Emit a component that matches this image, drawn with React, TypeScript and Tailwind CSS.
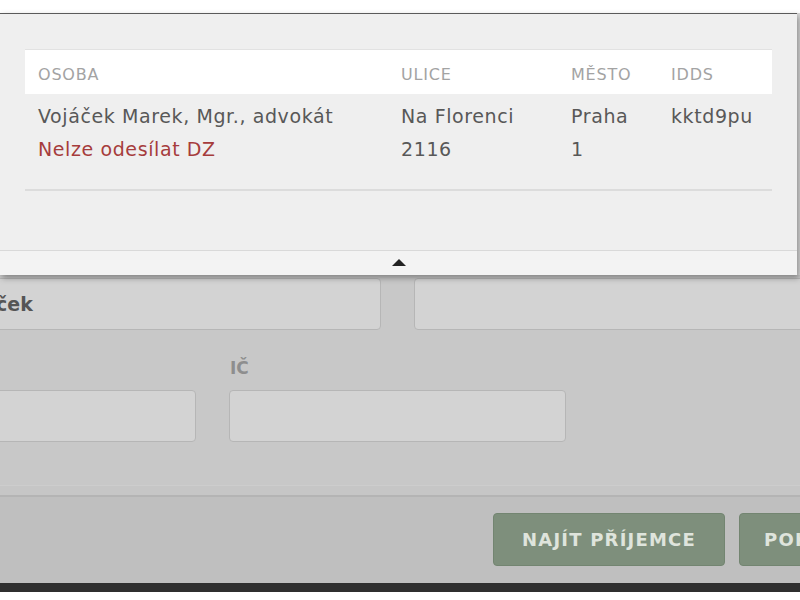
import React from "react";

// Recipient search result row
interface Recipient {
  name: string;
  note: string;
  street: string[];
  city: string[];
  idds: string;
}

const recipients: Recipient[] = [
  {
    name: "Vojáček Marek, Mgr., advokát",
    note: "Nelze odesílat DZ",
    street: ["Na Florenci", "2116"],
    city: ["Praha", "1"],
    idds: "kktd9pu",
  },
];

const font = { fontFamily: '"DejaVu Sans", "Open Sans", sans-serif' };

function ResultsPopup() {
  return (
    <div className="relative z-10 w-[797px] border-t border-[#5a5a5a] bg-[#efefef] shadow-[2px_3px_6px_rgba(0,0,0,0.35)]">
      <div className="px-[25px] pt-[35px]">
        <div className="grid h-[45px] grid-cols-[363px_170px_100px_1fr] items-center border-t border-[#e2e2e2] bg-white pl-[13px] pt-[5px] text-[16px] uppercase tracking-[0.8px] text-[#a3a3a3]">
          <span>Osoba</span>
          <span>Ulice</span>
          <span>Město</span>
          <span>IDDS</span>
        </div>
        {recipients.map((r) => (
          <div
            key={r.idds}
            className="grid grid-cols-[363px_170px_100px_1fr] border-b-2 border-[#dcdcdc] pb-[23px] pl-[13px] pt-[6px] text-[19px] leading-[33px] tracking-[0.6px] text-[#585858]"
          >
            <div>
              <div>{r.name}</div>
              <div className="text-[#a63c3c]">{r.note}</div>
            </div>
            <div>
              {r.street.map((s) => (
                <div key={s}>{s}</div>
              ))}
            </div>
            <div>
              {r.city.map((c) => (
                <div key={c}>{c}</div>
              ))}
            </div>
            <div>{r.idds}</div>
          </div>
        ))}
      </div>
      <div className="mt-[59px] flex h-[25px] items-center justify-center border-t border-[#d9d9d9] bg-[#f3f3f3]">
        <span className="mb-[2px] h-0 w-0 border-x-[7px] border-b-[7px] border-x-transparent border-b-[#222]" />
      </div>
    </div>
  );
}

function SearchForm() {
  return (
    <div className="overflow-hidden bg-[#c8c8c8] pb-[43px] pt-[3px]">
      <div className="flex gap-[33px]">
        <div className="-ml-[4px] flex h-[52px] w-[385px] shrink-0 items-center rounded-[4px] border border-[#b6b6b6] bg-[#d3d3d3] text-[19px] font-bold text-[#555]">
          <span className="-ml-[1px]">ček</span>
        </div>
        <div className="h-[52px] w-[420px] shrink-0 rounded-[4px] border border-[#b6b6b6] bg-[#d3d3d3]" />
      </div>
      <div className="mt-[24px] flex items-end gap-[33px]">
        <div className="-ml-[4px] h-[52px] w-[200px] shrink-0 rounded-[4px] border border-[#b6b6b6] bg-[#d3d3d3]" />
        <div className="flex flex-col">
          <label className="mb-[8px] pl-[1px] text-[17px] font-bold leading-[28px] text-[#8e8e8e]">IČ</label>
          <div className="h-[52px] w-[337px] rounded-[4px] border border-[#b6b6b6] bg-[#d3d3d3]" />
        </div>
      </div>
    </div>
  );
}

function Footer() {
  return (
    <div className="overflow-hidden">
      <div className="h-[10px] border-t border-[#cdcdcd] bg-[#c6c6c6]" />
      <div className="flex h-[88px] items-start gap-[14px] border-t-2 border-[#b4b4b4] bg-[#bfbfbf] pl-[493px] pt-[16px]">
        <button className="h-[53px] w-[232px] shrink-0 rounded-[4px] border border-[#738571] bg-[#7e8f7c] text-[18px] font-bold tracking-[1.2px] text-[#dfe4dc]">
          NAJÍT PŘÍJEMCE
        </button>
        <button className="h-[53px] w-[200px] shrink-0 rounded-[4px] border border-[#738571] bg-[#7e8f7c] pl-[24px] text-left text-[18px] font-bold tracking-[1.2px] text-[#dfe4dc]">
          POKRAČOVAT
        </button>
      </div>
      <div className="h-[9px] bg-[#2f2f2f]" />
      <div className="h-[8px] bg-white" />
    </div>
  );
}

export default function App() {
  return (
    <div className="h-[600px] w-[800px] overflow-hidden bg-[#dadada]" style={font}>
      <div className="h-[13px] bg-white" />
      <ResultsPopup />
      <SearchForm />
      <Footer />
    </div>
  );
}
